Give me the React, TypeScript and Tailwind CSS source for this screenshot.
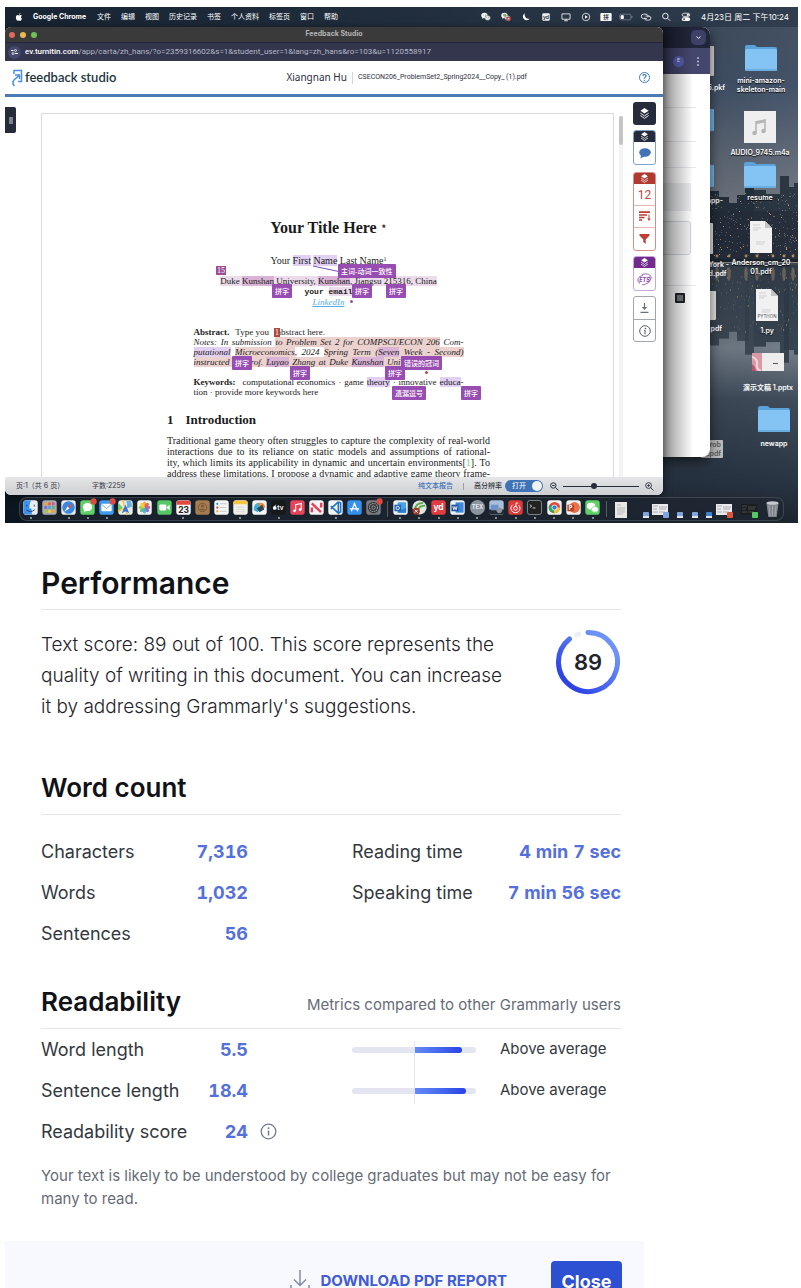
import React from "react";
import type { ReactNode } from "react";

const MENUS = ["文件", "编辑", "视图", "历史记录", "书签", "个人资料", "标签页", "窗口", "帮助"];

/* ---------- wallpaper ---------- */

const TOWERS = [
  [700, 184, 14], [714, 190, 10], [724, 196, 8], [732, 188, 12], [740, 176, 9], [749, 183, 12],
  [761, 187, 14], [775, 169, 9], [779, 180, 10], [789, 176, 12],
];

function Wallpaper() {
  const lights: ReactNode[] = [];
  let seed = 7;
  const rnd = () => {
    seed = (seed * 16807) % 2147483647;
    return seed / 2147483647;
  };
  for (let i = 0; i < 330; i++) {
    const x = 690 + Math.floor(rnd() * 104);
    const y = 186 + Math.floor(rnd() * 64);
    const warm = rnd();
    const fill = warm > 0.8 ? "#d9b070" : warm > 0.4 ? "#7d776c" : "#56616f";
    lights.push(<rect key={i} x={x} y={y} width="1" height="1" fill={fill} opacity={0.8} />);
    if (i % 2) lights.push(<rect key={"r" + i} x={x} y={510 - y} width="1" height="2" fill={fill} opacity={0.4} />);
  }
  return (
    <svg className="absolute inset-0 h-full w-full" viewBox="0 0 793 516" preserveAspectRatio="xMaxYMin slice" aria-hidden="true">
      <defs>
        <linearGradient id="sky" x1="0" y1="0" x2="0" y2="1">
          <stop offset="0" stopColor="#44505f" />
          <stop offset="0.15" stopColor="#445369" />
          <stop offset="0.38" stopColor="#737982" />
          <stop offset="0.5" stopColor="#3f464f" />
          <stop offset="0.66" stopColor="#76808b" />
          <stop offset="0.76" stopColor="#414c5b" />
          <stop offset="0.93" stopColor="#283341" />
          <stop offset="1" stopColor="#1c242e" />
        </linearGradient>
        <linearGradient id="shade" x1="0" y1="0" x2="1" y2="0">
          <stop offset="0" stopColor="#08131d" stopOpacity="0.85" />
          <stop offset="0.5" stopColor="#0a1520" stopOpacity="0.55" />
          <stop offset="1" stopColor="#0a1520" stopOpacity="0" />
        </linearGradient>
      </defs>
      <rect width="793" height="516" fill="url(#sky)" />
      {TOWERS.map(([x, y, w]) => (
        <g key={x}>
          <rect x={x} y={y} width={w} height={254 - y} fill={x % 2 ? "#2c3744" : "#25303d"} />
          <rect x={x} y="258" width={w} height={(254 - y) * 1.15} fill={x % 2 ? "#2e3946" : "#36414e"} opacity="0.85" />
        </g>
      ))}
      <rect x="690" y="204" width="103" height="50" fill="#232c37" opacity="0.7" />
      {lights}
      <rect x="690" y="252" width="103" height="3" fill="#1d242c" />
      <rect x="690" y="255" width="103" height="1" fill="#8b8a87" />
      {[712, 724, 741, 752, 768, 779, 788].map((x) => (
        <g key={x}>
          <circle cx={x} cy="249" r="1.4" fill="#e0a868" opacity="0.8" />
          <ellipse cx={x} cy="267" rx="1.8" ry="7" fill="#d9a878" opacity="0.35" />
        </g>
      ))}
      <rect width="793" height="516" fill="url(#shade)" />
    </svg>
  );
}

/* ---------- desktop icons ---------- */

function Folder() {
  return (
    <svg width="32" height="27" viewBox="0 0 32 27">
      <path d="M0 3q0-2 2-2h7q1 0 2 1l1 1h18q2 0 2 2v5H0z" fill="#5aa2d8" />
      <rect y="5" width="32" height="22" rx="1.5" fill="#83c4f5" />
      <rect y="25" width="32" height="2" rx="1" fill="#6aaee0" />
    </svg>
  );
}
function Sheet({ tag }: { tag?: string }) {
  return (
    <svg width="24" height="32" viewBox="0 0 24 32">
      <path d="M1 0h15l7 7v25H1z" fill="#f1f1f1" />
      <path d="M16 0l7 7h-7z" fill="#c4c4c4" />
      <path d="M4 4h7M4 7h8M4 9h5M7 21h9M7 23h8" stroke="#c2c2c2" strokeWidth="0.7" />
      {tag && <text x="12" y="29" textAnchor="middle" fontSize="4.5" fontFamily="Inter, sans-serif" fill="#555">{tag}</text>}
    </svg>
  );
}
function Audio() {
  return (
    <svg width="32" height="32" viewBox="0 0 32 32">
      <rect width="32" height="32" fill="#efefef" />
      <path d="M12 22V11l9-2v11" fill="none" stroke="#b5b5b5" strokeWidth="1.6" />
      <path d="M12 12l9-2" stroke="#b5b5b5" strokeWidth="2.5" />
      <circle cx="10.5" cy="22" r="2.2" fill="#b5b5b5" />
      <circle cx="19.5" cy="20" r="2.2" fill="#b5b5b5" />
    </svg>
  );
}
function Slides() {
  return (
    <svg width="32" height="18" viewBox="0 0 32 18">
      <rect width="32" height="18" fill="#eeecec" />
      <rect width="10" height="18" fill="#d99aa5" />
      <path d="M0 4q6 2 5 7t4 7" stroke="#f3d4d8" strokeWidth="2" fill="none" />
      <path d="M0 11q3 2 4 7H0z" fill="#b9536b" />
      <path d="M21 10.500h5" stroke="#555" />
    </svg>
  );
}

function DesktopItem({ at, label, children }: { at: string; label: string; children: ReactNode }) {
  return (
    <div className={`absolute flex w-[66px] flex-col items-center gap-[5px] ${at}`}>
      {children}
      <span className="text-center text-[7px] font-semibold leading-[9px] whitespace-pre-line text-white [text-shadow:0_1px_1px_#000]">{label}</span>
    </div>
  );
}

function Peek({ at, children }: { at: string; children: ReactNode }) {
  return <span className={`absolute text-[7px] font-semibold leading-[9px] whitespace-pre-line text-white ${at}`}>{children}</span>;
}

/* ---------- menu bar ---------- */

function Apple({ className }: { className: string }) {
  return (
    <svg className={className} viewBox="0 0 16 16" fill="currentColor">
      <path d="M11.200 0c.1 1.500-1.200 3.100-2.800 3.200C8.200 1.700 9.700.2 11.200 0zM13.800 11.300c-.7 1.900-2 4.200-3.500 4.200-.9 0-1.300-.6-2.400-.6s-1.500.6-2.400.6C3.700 15.500 1.800 12 1.800 8.800c0-3 1.900-4.700 3.800-4.700 1 0 1.900.7 2.600.7.600 0 1.700-.8 3-.8 1.100 0 2 .5 2.600 1.400-2.500 1.500-2.100 4.800 0 5.900z" />
    </svg>
  );
}
function ChatPair() {
  return (
    <>
      <ellipse cx="5.500" cy="5.500" rx="5" ry="4.300" fill="#fff" />
      <path d="M2.500 8l-.5 3 3-2z" fill="#fff" />
      <ellipse cx="10.500" cy="9.500" rx="4.500" ry="3.800" fill="#e8eaec" stroke="#3a4755" strokeWidth="0.7" />
      <circle cx="4" cy="4.800" r=".7" fill="#3a4755" /><circle cx="7" cy="4.800" r=".7" fill="#3a4755" />
      <circle cx="9" cy="9" r=".6" fill="#3a4755" /><circle cx="12" cy="9" r=".6" fill="#3a4755" />
    </>
  );
}
const TRAY: ReactNode[] = [
  <ChatPair />,
  <>
    <ChatPair />
    <circle cx="6" cy="5" r="2.500" fill="#7db36c" />
    <circle cx="12" cy="11" r="3.800" fill="#b7493f" />
    <path d="M10.500 9.500l3 3m0-3l-3 3" stroke="#fff" />
  </>,
  <path d="M6 2a6 6 0 1 0 8 8.500A6.500 6.500 0 0 1 6 2z" fill="#fff" />,
  <>
    <rect x="2" y="2" width="12" height="12" rx="2" fill="#eef0f2" />
    <text x="8" y="11" fontSize="8" fontWeight="700" textAnchor="middle" fontFamily="Inter, sans-serif" fill="#2f3d4c">yd</text>
  </>,
  <path d="M1.500 3h13v8.500h-13zM5 14h6M8 11.500V14" fill="none" stroke="#fff" strokeWidth="1.300" />,
  <>
    <circle cx="8" cy="8" r="6" fill="none" stroke="#fff" strokeWidth="1.200" />
    <path d="M6.500 5.200v5.600L11 8z" fill="#fff" />
  </>,
  <>
    <rect x="-1" y="1.500" width="18" height="13" rx="1.500" fill="#fff" />
    <text x="8" y="11.500" fontSize="9" fontWeight="700" textAnchor="middle" fontFamily="'Noto Sans CJK SC', sans-serif" fill="#2f3d4c">拼</text>
  </>,
  <>
    <rect x="-2" y="3.500" width="18" height="9" rx="2.500" fill="none" stroke="#8f99a4" />
    <rect x="-.5" y="5" width="5" height="6" rx="1" fill="#fff" />
    <path d="M17.500 6.500v3" stroke="#8f99a4" />
  </>,
  <path d="M9.500 10.500H4a3.500 3.500 0 0 1 0-7h4a3.500 3.500 0 0 1 3 5M7 6.500h5.500a3 3 0 0 1 0 6.500H9a3 3 0 0 1-3-4" fill="none" stroke="#fff" strokeWidth="1.300" />,
  <path d="M11.500 6.500a4.500 4.500 0 1 1-9 0 4.500 4.500 0 0 1 9 0zM10.500 10l4 4" fill="none" stroke="#fff" strokeWidth="1.400" />,
  <>
    <rect x="2" y="2" width="12" height="5" rx="2.500" fill="none" stroke="#fff" strokeWidth="1.200" />
    <circle cx="11" cy="4.500" r="1.800" fill="#fff" />
    <rect x="1.500" y="8.500" width="13" height="6" rx="3" fill="#fff" />
    <circle cx="5" cy="11.500" r="1.500" fill="#3a4755" />
  </>,
];

function MenuBar() {
  return (
    <div className="relative flex h-5 items-center bg-[#1d2c3d]/50 pr-[9px] pl-[10px] text-[7px] text-white">
      <Apple className="mr-[10px] size-2" />
      <span className="mr-[11px] text-[7px] font-bold">Google Chrome</span>
      <nav className="flex gap-[10px]">
        {MENUS.map((m) => <span key={m}>{m}</span>)}
      </nav>
      <div className="ml-auto flex items-center gap-[10px]">
        {TRAY.map((g, i) => (
          <svg key={i} className="size-[10px] overflow-visible" viewBox="0 0 16 16" aria-hidden="true">{g}</svg>
        ))}
        <span className="text-[8px] whitespace-nowrap">4月23日 周二 下午10:24</span>
      </div>
    </div>
  );
}

/* ---------- background window ---------- */

function BackWindow() {
  return (
    <div className="absolute top-[20px] left-[600px] flex h-[430px] w-[105px] flex-col overflow-hidden rounded-lg bg-white shadow-[0_4px_12px_rgba(0,0,0,.6)]">
      <div className="flex h-[21px] items-center justify-end bg-[#22263b] pr-1">
        <span className="grid size-[15px] place-items-center rounded-[5px] bg-[#3d4166]">
          <svg width="5" height="4" viewBox="0 0 5 4"><path d="M.5 .5l2 2 2-2" fill="none" stroke="#fff" /></svg>
        </span>
      </div>
      <div className="flex h-[26px] items-center justify-end gap-[13px] bg-[#44476d] pr-[11px]">
        <span className="grid size-[11px] place-items-center rounded-full bg-[#5960b4] text-[5px] text-white">E</span>
        <svg width="2" height="9" viewBox="0 0 2 9" fill="#c3c5dd"><circle cx="1" cy="1" r=".9" /><circle cx="1" cy="4.500" r=".9" /><circle cx="1" cy="8" r=".9" /></svg>
      </div>
      <div className="flex grow flex-col pr-[14px]">
        <div className="h-[34px] border-b border-gray-200" />
        <div className="h-[34px] border-b border-gray-200" />
        <div className="h-[26px] border-b border-gray-200" />
        <div className="mt-[15px] mr-[5px] h-[28px] bg-[#ebedef]" />
        <div className="mt-[10px] mr-[5px] h-[34px] rounded-[3px] border border-gray-300 bg-[#f5f5f5]" />
        <div className="mt-[30px] border-b border-gray-200" />
        <svg className="mt-[7px] mr-[11px] self-end" width="10" height="10" viewBox="0 0 10 10"><rect width="10" height="10" rx="1" fill="#1f2329" /><path d="M2 3h6M2 5h6M2 7h6" stroke="#fff" strokeWidth=".8" /></svg>
      </div>
      <div className="absolute inset-y-0 left-[56px] w-8 bg-gradient-to-r from-black/45 to-transparent" />
    </div>
  );
}

/* ---------- feedback studio window ---------- */

function Layers() {
  return (
    <svg width="9" height="9" viewBox="0 0 16 16">
      <path d="M8 0l6 4-6 4-6-4z" fill="#fff" />
      <path d="M2 7.500l6 4 6-4M2 11l6 4 6-4" fill="none" stroke="#fff" strokeWidth="1.300" />
    </svg>
  );
}

function ToolRail() {
  return (
    <div className="flex w-[23px] flex-col">
      <button aria-label="Layers" className="grid h-[23px] place-items-center rounded-[3px] bg-[#272c3c]">
        <svg width="11" height="11" viewBox="0 0 16 16">
          <path d="M8 0l6 4-6 4-6-4z" fill="#fff" />
          <path d="M2 7.500l6 4 6-4M2 11l6 4 6-4" fill="none" stroke="#fff" strokeWidth="1.300" />
        </svg>
      </button>
      <div className="mt-[5px] overflow-hidden rounded-[3px] border border-[#7ea2cf]">
        <div className="-mx-px -mt-px grid h-3 place-items-center bg-[#272c3c]"><Layers /></div>
        <button aria-label="Comments" className="grid h-[22px] w-full place-items-center">
          <svg width="12" height="11" viewBox="0 0 12 11"><ellipse cx="6" cy="4.500" rx="5.800" ry="4.200" fill="#3f73b5" /><path d="M2 7l-.5 3.500L6 8z" fill="#3f73b5" /></svg>
        </button>
      </div>
      <div className="mt-[7px] overflow-hidden rounded-[3px] border border-[#d98d86]">
        <div className="-mx-px -mt-px grid h-3 place-items-center bg-[#b03a31]"><Layers /></div>
        <button className="grid h-[21px] w-full place-items-center font-[Roboto] text-[12px] leading-none text-[#c0473c]">12</button>
        <button aria-label="Sources" className="grid h-[23px] w-full place-items-center border-y border-[#e8b9b4]">
          <svg width="12" height="11" viewBox="0 0 12 11"><path d="M0 1.200h11M0 4h8M0 6.500h5.500M0 9h3" stroke="#bd3f35" strokeWidth="1.700" /><path d="M10 3.500v5" stroke="#bd3f35" /><path d="M8.300 7.500h3.400L10 10z" fill="#bd3f35" /></svg>
        </button>
        <button aria-label="Filter" className="grid h-[22px] w-full place-items-center">
          <svg width="11" height="10" viewBox="0 0 11 10"><path d="M.5 0h10v1.500L6.700 5.500V10L4.300 8V5.500L.5 1.500z" fill="#bd3f35" /></svg>
        </button>
      </div>
      <div className="mt-[5px] overflow-hidden rounded-[3px] border border-[#c9a5da]">
        <div className="-mx-px -mt-px grid h-3 place-items-center bg-[#712b8d]"><Layers /></div>
        <button aria-label="ETS" className="grid h-[22px] w-full place-items-center">
          <svg width="15" height="13" viewBox="0 0 15 13">
            <path d="M3 10.500C-1 8 1 3 6 2.500M5 1.500c5-1.500 9.500 0 9.300 4M12 3.500c4 3-1 8-7 8.300" fill="none" stroke="#8c3fa8" strokeWidth=".8" />
            <text x="7.500" y="8.500" fontSize="5.500" fontStyle="italic" fontWeight="700" textAnchor="middle" fontFamily="Inter, sans-serif" fill="#8c3fa8">ETS</text>
          </svg>
        </button>
      </div>
      <div className="mt-[5px] overflow-hidden rounded-[3px] border border-[#a3a6ad]">
        <button aria-label="Download" className="grid h-[22px] w-full place-items-center">
          <svg width="9" height="10" viewBox="0 0 9 10"><path d="M4.500 0v5M.5 9.300h8" stroke="#6b6f78" strokeWidth="1.200" /><path d="M1.800 4h5.400L4.500 7z" fill="#6b6f78" /></svg>
        </button>
        <button aria-label="Info" className="grid h-[22px] w-full place-items-center border-t border-[#a3a6ad]">
          <svg width="12" height="12" viewBox="0 0 12 12"><circle cx="6" cy="6" r="5.300" fill="none" stroke="#5b5f68" /><circle cx="6.500" cy="3.500" r=".8" fill="#5b5f68" /><path d="M5 5.300h1.300L5.700 8.700h1" fill="none" stroke="#5b5f68" /></svg>
        </button>
      </div>
    </div>
  );
}

const P = ({ children }: { children: ReactNode }) => <span className="bg-[#e2d0f2]">{children}</span>;
const R = ({ children }: { children: ReactNode }) => <span className="bg-[#ecd2cf]">{children}</span>;
const M = ({ children }: { children: ReactNode }) => <span className="bg-[#d9b4d6]">{children}</span>;

function Line({ children, last }: { children: ReactNode; last?: boolean }) {
  return <div className={last ? "whitespace-nowrap" : "[text-align-last:justify]"}>{children}</div>;
}

function Tag({ at, children }: { at: string; children: ReactNode }) {
  return <button className={`absolute rounded-[1px] bg-[#974db1] px-[3px] text-[7px] leading-[14px] font-medium whitespace-nowrap text-white ${at}`}>{children}</button>;
}

function Paper() {
  return (
    <article className="relative flex w-[573px] flex-col items-center overflow-hidden border-x border-t border-[#dcdcdc] bg-white pt-[105px] pl-[2px] font-['Liberation_Serif',serif] text-[#1b1b1b]">
      <h1 className="text-[16px] leading-[18px] font-bold">Your Title Here <sup className="text-[9px]">⋆</sup></h1>
      <p className="mt-[18px] text-[10px] leading-[12px]">Your <P>First</P> <P>Name</P> Last Name<sup className="text-[6px]">1</sup></p>
      <p className="mt-[9px] text-[9px] leading-[11px]"><span className="bg-[#ecdbea]">Duke <M>Kunshan</M> University, <M>Kunshan</M>, Jiangsu 215316, China</span></p>
      <p className="font-['Liberation_Mono',monospace] text-[8px] leading-[10px] font-bold">your <span className="bg-[#ecdbea]">email</span></p>
      <p className="text-[9px] leading-[11px] text-[#55ade0] italic"><a href="#linkedin" className="underline">LinkedIn</a></p>
      <div className="mt-[19px] w-[270px] text-[9px] leading-[10px]">
        <Line last><b className="mr-1">Abstract.</b> Type you<i className="inline-block w-[8px]" />abstract here.</Line>
        <div className="italic">
          <Line>Notes: In submission <R>to Problem Set 2 for COMPSCI/ECON 206</R> Com-</Line>
          <Line><P>putational</P> <R>Microeconomics</R>, 2024 <R>Spring Term (<M>Seven</M> Week - Second)</R></Line>
          <div className="w-[207px]"><Line><R>instructed<i className="inline-block w-[21px]" />rof. <M>Luyao</M> Zhang at Duke <M>Kunshan</M> Uni</R></Line></div>
        </div>
        <div className="mt-[10px]">
          <Line><b className="mr-1">Keywords:</b> computational economics · game <P>theory</P> · innovative <P>educa</P>-</Line>
          <Line last>tion · provide more keywords here</Line>
        </div>
      </div>
      <div className="mt-[16px] w-[323px] text-[10px] leading-[11px]">
        <h2 className="flex gap-3 text-[13px] leading-[14px] font-bold"><span>1</span><span>Introduction</span></h2>
        <div className="mt-[8px]">
          <Line>Traditional game theory often struggles to capture the complexity of real-world</Line>
          <Line>interactions due to its reliance on static models and assumptions of rational-</Line>
          <Line>ity, which limits its applicability in dynamic and uncertain environments[<span className="text-[#6fe05a]">1</span>]. To</Line>
          <Line>address these limitations, I propose a dynamic and adaptive game theory frame-</Line>
        </div>
      </div>
      <svg className="absolute top-[151px] left-[267px]" width="34" height="8" viewBox="0 0 34 8"><path d="M4 1l28 6" stroke="#7a4fc0" /></svg>
      <span className="absolute top-[152px] left-[174px] bg-[#9c4f97] px-px text-[8px] leading-[9px] text-white">15</span>
      <span className="absolute top-[214px] left-[232px] bg-[#b04a3f] px-px text-[8px] leading-[9px] text-white">1</span>
      <span className="absolute top-[186px] left-[308px] size-[3px] rounded-full bg-[#9c4f97]" />
      <span className="absolute top-[257px] left-[383px] size-[3px] rounded-full bg-[#c0473c]" />
      <div className="font-['Noto_Sans_CJK_SC',sans-serif]">
        <Tag at="top-[150px] left-[296px]">主词-动词一致性</Tag>
        <Tag at="top-[170px] left-[230px]">拼字</Tag>
        <Tag at="top-[170px] left-[310px]">拼字</Tag>
        <Tag at="top-[170px] left-[344px]">拼字</Tag>
        <Tag at="top-[242px] left-[190px]">拼字</Tag>
        <Tag at="top-[242px] left-[359px]">错误的冠词</Tag>
        <Tag at="top-[252px] left-[248px]">拼字</Tag>
        <Tag at="top-[252px] left-[343px]">拼字</Tag>
        <Tag at="top-[272px] left-[350px]">遗漏逗号</Tag>
        <Tag at="top-[272px] left-[419px]">拼字</Tag>
      </div>
    </article>
  );
}

function StudioWindow() {
  return (
    <section className="absolute top-[20px] left-0 flex h-[468px] w-[658px] flex-col overflow-hidden rounded-md bg-white shadow-[0_2px_10px_rgba(0,0,0,.6)]">
      <div className="relative flex h-[15px] shrink-0 items-center gap-[5px] bg-[#393a39] px-1">
        <span className="size-[6px] rounded-full bg-[#e0695e]" />
        <span className="size-[6px] rounded-full bg-[#e8b950]" />
        <span className="size-[6px] rounded-full bg-[#6fc257]" />
        <span className="grow pr-[33px] text-center text-[7px] font-bold text-[#b5b5b5]">Feedback Studio</span>
      </div>
      <div className="flex h-[19px] shrink-0 items-center gap-1 border-t border-[#24263a] bg-[#33364d] pl-[3px] font-[Roboto] text-[8px] text-[#b4b6c6]">
        <span className="grid size-[13px] place-items-center rounded-full bg-[#43486c]">
          <svg width="7" height="6" viewBox="0 0 7 6"><path d="M0 1.500h2.500M4 4.500h3" stroke="#fff" /><circle cx="4.500" cy="1.500" r="1" fill="none" stroke="#fff" strokeWidth=".8" /><circle cx="2" cy="4.500" r="1" fill="none" stroke="#fff" strokeWidth=".8" /></svg>
        </span>
        <span className="whitespace-nowrap"><b className="font-medium text-white">ev.turnitin.com</b>/app/carta/zh_hans/?o=2359316602&amp;s=1&amp;student_user=1&amp;lang=zh_hans&amp;ro=103&amp;u=1120558917</span>
      </div>
      <header className="flex h-[36px] shrink-0 items-center border-b-[3px] border-[#4b7ab6] pr-[13px] pl-[7px]">
        <svg width="11" height="18" viewBox="0 0 11 18" fill="none" stroke="#4b8fec" strokeWidth="1.500"><path d="M2 5V1.500h7.500v11H6" /><path d="M3 6h4.500v4M7 6.500L2 11q-2.500 3 .5 6" /></svg>
        <span className="ml-[2px] font-[Lato] text-[13px] font-semibold whitespace-nowrap text-[#1d3440]">feedback studio</span>
        <div className="flex grow items-center justify-center pl-[58px] whitespace-nowrap text-[#2b2e3b]">
          <span className="font-['Noto_Sans'] text-[10px]">Xiangnan Hu</span>
          <span className="mx-[5px] h-3 border-l border-gray-300" />
          <span className="font-[Roboto] text-[7px]">CSECON206_ProblemSet2_Spring2024__Copy_ (1).pdf</span>
        </div>
        <button aria-label="Help" className="grid size-[11px] place-items-center rounded-full border border-[#3f7cc0] text-[9px] leading-none font-semibold text-[#3f7cc0]">?</button>
      </header>
      <div className="flex min-h-0 grow overflow-hidden bg-white">
        <button aria-label="Expand panel" className="mt-[10px] grid h-[26px] w-[11px] shrink-0 place-items-center rounded-r-[2px] bg-[#272c3c]">
          <svg width="4" height="7" viewBox="0 0 4 7"><path d="M1 0v7M3 0v7" stroke="#d6d8de" /></svg>
        </button>
        <div className="mt-4 ml-[25px] flex shrink-0"><Paper /></div>
        <div className="mt-[19px] ml-[5px] w-1 shrink-0 bg-[#f4f4f4]"><div className="h-[29px] rounded-full bg-[#c4c4c4]" /></div>
        <div className="mt-[5px] ml-[10px]"><ToolRail /></div>
      </div>
      <footer className="flex h-[18px] shrink-0 items-center bg-gradient-to-b from-[#e5e6e8] to-[#cdcfd1] pr-[9px] pl-[11px] text-[7px] text-[#33373f]">
        <span className="w-[76px]">页:1（共 6 页）</span>
        <span>字数:2259</span>
        <a href="#text-report" className="ml-auto font-medium text-[#3f73b5]">纯文本报告</a>
        <span className="mx-[10px] h-[7px] border-l border-gray-400" />
        <span className="font-medium">高分辨率</span>
        <button role="switch" aria-checked="true" className="ml-[3px] flex h-3 w-[38px] items-center justify-between rounded-full bg-[#3f73b5] pr-px pl-[7px] text-[7px] text-white">打开<i className="size-[10px] rounded-full bg-[#f2f2f2]" /></button>
        <svg className="ml-[7px]" width="9" height="9" viewBox="0 0 9 9"><path d="M6 3.500a2.700 2.700 0 1 1-5.400 0 2.700 2.700 0 0 1 5.400 0zM5.500 5.500l3 3M2.200 3.500h2.400" fill="none" stroke="#272c3c" /></svg>
        <input aria-label="Zoom" type="range" defaultValue={40} className="mx-[4px] h-2 w-[76px] appearance-none bg-[linear-gradient(#272c3c,#272c3c)] bg-[length:100%_1px] bg-center bg-no-repeat [&::-webkit-slider-thumb]:size-[6px] [&::-webkit-slider-thumb]:appearance-none [&::-webkit-slider-thumb]:rounded-full [&::-webkit-slider-thumb]:bg-[#272c3c]" />
        <svg className="ml-[2px]" width="9" height="9" viewBox="0 0 9 9"><path d="M6.500 3.500a2.900 2.900 0 1 1-5.800 0 2.900 2.900 0 0 1 5.800 0zM5.500 5.500l3 3M2.300 3.500h2.600M3.600 2.200v2.600" fill="none" stroke="#272c3c" strokeWidth=".9" /></svg>
      </footer>
    </section>
  );
}

/* ---------- dock ---------- */

type App = { bg: string; art: ReactNode; open?: boolean; badge?: boolean };
const label = (s: string, size: number, fill = "#fff", y = 11) => (
  <text x="8" y={y} fontSize={size} fontWeight="700" textAnchor="middle" fontFamily="Inter, sans-serif" fill={fill}>{s}</text>
);
const PETALS = ["#f2a23a", "#e7603f", "#c659a3", "#7a6fd0", "#4fa6df", "#56b97b", "#9ccb4a", "#f0d03c"];
const DOCK_A: App[] = [
  { bg: "#e9eef4", open: true, art: <><path d="M3 .5h5.500Q6.500 5 7 9h2l.5 6.500H3A2.500 2.500 0 0 1 .5 13V3A2.500 2.500 0 0 1 3 .5z" fill="#3c93ee" /><path d="M4 5v2M12 5v2M3.500 10.500q4.500 3.500 9 0" fill="none" stroke="#1d3554" strokeWidth=".9" /></> },
  { bg: "#a9adb2", art: <>{[3, 7, 11].map((y, i) => [3, 7, 11].map((x, j) => <rect key={`${x}-${y}`} x={x - 0.5} y={y - 0.5} width="3" height="3" rx=".6" fill={PETALS[(i * 3 + j) % 8]} />))}</> },
  { bg: "#e9eef4", open: true, art: <><circle cx="8" cy="8" r="6.700" fill="#3a86e0" /><path d="M12.500 3.500L9 9 7 7z" fill="#e5483c" /><path d="M3.500 12.500L7 7l2 2z" fill="#fff" /></> },
  { bg: "#5fd06a", open: true, badge: true, art: <><ellipse cx="8" cy="7.500" rx="5" ry="4.300" fill="#fff" /><path d="M5 10l-1 3 4-2z" fill="#fff" /></> },
  { bg: "#3f9bee", open: true, badge: true, art: <><rect x="2.500" y="4" width="11" height="8" rx="1" fill="#fff" /><path d="M2.500 4.500L8 9l5.500-4.500" fill="none" stroke="#5a9fe0" strokeWidth=".9" /></> },
  { bg: "#e8ece6", art: <><path d="M0 3l5 5-5 6z" fill="#6ccb6a" /><path d="M5 0l5 16M0 12L16 5" stroke="#f3c544" strokeWidth="1.600" /><path d="M9 1h5l1 6-5 2z" fill="#66b3ea" /><path d="M8 5l4 9-4-2-4 2z" fill="#3a6fd5" /></> },
  { bg: "#f4f4f2", art: <>{PETALS.map((c, i) => <ellipse key={c} cx="8" cy="4.700" rx="1.900" ry="3" fill={c} opacity=".9" transform={`rotate(${i * 45} 8 8)`} />)}</> },
  { bg: "#57c866", art: <><rect x="2.500" y="4.700" width="7.500" height="6.500" rx="1.500" fill="#fff" /><path d="M10.500 7.500L13.500 5v6l-3-2.500z" fill="#fff" /></> },
  { bg: "#f7f7f7", open: true, art: <><path d="M3 .5h10A2.500 2.500 0 0 1 15.500 3v2H.5V3A2.500 2.500 0 0 1 3 .5z" fill="#e0493e" />{label("23", 9, "#222", 13.500)}</> },
  { bg: "#a47c4f", art: <><circle cx="8" cy="8" r="4.500" fill="none" stroke="#7b5a34" /><circle cx="8" cy="6.500" r="1.600" fill="#7b5a34" /><path d="M4.800 11q3.200-4 6.400 0z" fill="#7b5a34" /></> },
  { bg: "#f5f5f5", art: <><circle cx="3.500" cy="4" r="1.200" fill="#3a86e0" /><circle cx="3.500" cy="8" r="1.200" fill="#e5483c" /><circle cx="3.500" cy="12" r="1.200" fill="#f0a030" /><path d="M6.500 4h7M6.500 8h7M6.500 12h7" stroke="#bbb" strokeWidth=".8" /></> },
  { bg: "#f3f1ea", open: true, art: <><path d="M3 .5h10A2.500 2.500 0 0 1 15.500 3v1.500H.5V3A2.500 2.500 0 0 1 3 .5z" fill="#f5c744" /><path d="M3 7.500h10M3 10h10M3 12.500h10" stroke="#ccc" strokeWidth=".7" /></> },
  { bg: "#f5f6f5", art: <><path d="M2 11q-1-7 5-8l3 2-4 8z" fill="#3fb0d8" /><path d="M7 3q7-1 7 5l-6 4z" fill="#ef8b3a" /><path d="M5 9l6-4 2 5-5 3z" fill="#2d4660" /></> },
  { bg: "#16181a", open: true, art: <><text x="10" y="10.500" fontSize="7" fontWeight="600" textAnchor="middle" fontFamily="Inter, sans-serif" fill="#fff">tv</text><circle cx="4" cy="8.500" r="2" fill="#fff" /><path d="M4 6.500l1.200-1.500" stroke="#fff" strokeWidth=".8" /></> },
  { bg: "#e9435a", art: <><path d="M6 11.500V5l6-1.300v6.500" fill="none" stroke="#fff" strokeWidth="1.200" /><circle cx="4.800" cy="11.500" r="1.500" fill="#fff" /><circle cx="10.800" cy="10.300" r="1.500" fill="#fff" /></> },
  { bg: "#f5f5f5", art: <path d="M3 3.500L12.800 13M3 8v5M13 3v5" stroke="#e5415a" strokeWidth="2.600" /> },
  { bg: "#f2f5f8", open: true, art: <path d="M11 2v12L3 6.500M11 2L3 9.500M11 2l2.500 1.200v9.600L11 14" fill="none" stroke="#2273c3" strokeWidth="1.700" /> },
  { bg: "#3591ee", art: <path d="M8.500 3L4.500 12M7.500 3l4 9M3 9.500h10" stroke="#fff" strokeWidth="1.400" /> },
  { bg: "#797c80", badge: true, art: <><circle cx="8" cy="8" r="6" fill="#303236" /><circle cx="8" cy="8" r="4.300" fill="none" stroke="#a0a3a7" strokeWidth="1.200" strokeDasharray="1.500 .8" /><circle cx="8" cy="8" r="1.800" fill="none" stroke="#a0a3a7" /></> },
];
const DOCK_B: App[] = [
  { bg: "#eef2f6", open: true, art: <><rect x="5" y="2.500" width="9" height="11" rx="1" fill="#4aa3e8" /><path d="M5 8l4.500 2.500L14 8v5.500H5z" fill="#2f7fd0" /><rect x="1.500" y="5" width="7" height="7" fill="#1f62b0" /><circle cx="5" cy="8.500" r="1.800" fill="none" stroke="#fff" strokeWidth=".9" /></> },
  { bg: "transparent", open: true, art: <><circle cx="8" cy="8" r="7.500" fill="#dfe6dd" /><path d="M3 12Q3 3 12 3M6 14Q6 6 14 6" stroke="#5ea650" strokeWidth="2" fill="none" /><circle cx="4.500" cy="12" r="3.800" fill="#a3352b" /><path d="M3 10.500l3 3m0-3l-3 3" stroke="#fff" strokeWidth="1" /></> },
  { bg: "#e23b40", open: true, art: label("yd", 9) },
  { bg: "#eef2f6", open: true, art: <><rect x="6" y="2.500" width="8.500" height="11" fill="#3b88dc" /><rect x="1.500" y="5" width="7.500" height="7" fill="#1c4f9e" /><path d="M3 6.500l1 4 1.200-3.500L6.500 10.500l1-4" stroke="#fff" strokeWidth=".9" fill="none" /></> },
  { bg: "transparent", open: true, art: <><circle cx="8" cy="8" r="8" fill="#8b959d" />{label("TEX", 6, "#e3e6e9", 10)}</> },
  { bg: "#a8bedb", open: true, art: <><path d="M0 10h16v3a2.500 2.500 0 0 1-2.500 2.500h-11A2.500 2.500 0 0 1 0 13z" fill="#222a33" /><rect x="2" y="5" width="8" height="6" fill="#6d93c8" /><circle cx="11" cy="11" r="3" fill="#8d949c" /></> },
  { bg: "#dc3a38", open: true, art: <><circle cx="8" cy="8.800" r="2" fill="none" stroke="#fff" /><path d="M5 5a4.800 4.800 0 1 0 6.500.5M8.500 7V3.500q1.500-1 2.500.3" fill="none" stroke="#fff" /></> },
  { bg: "#202224", open: true, art: <><rect x=".5" y=".5" width="15" height="15" rx="2.500" fill="none" stroke="#8a8c8e" /><path d="M3 5l2 1.500L3 8M6 8.500h3" fill="none" stroke="#eee" strokeWidth=".9" /></> },
  { bg: "#f4f4f4", open: true, art: <><circle cx="8" cy="8" r="6" fill="#e1493c" /><path d="M8 8l-5.500-3A6 6 0 0 0 7.500 14z" fill="#3aa455" /><path d="M8 8h6a6 6 0 0 1-6.500 6z" fill="#f3c536" /><circle cx="8" cy="8" r="2.700" fill="#3c7de0" stroke="#fff" strokeWidth=".8" /></> },
  { bg: "#f4f1ef", open: true, art: <><circle cx="9" cy="8" r="5.800" fill="#e8704b" /><rect x="1.500" y="5" width="7" height="7" fill="#bd3f22" /><text x="5" y="10.500" fontSize="6" fontWeight="700" textAnchor="middle" fontFamily="Inter, sans-serif" fill="#fff">P</text></> },
  { bg: "#5fd06a", open: true, art: <><ellipse cx="6.500" cy="6.500" rx="4.500" ry="3.700" fill="#fff" /><ellipse cx="10.500" cy="10" rx="3.700" ry="3" fill="#fff" stroke="#5fd06a" strokeWidth=".6" /></> },
];

function DockIcon({ app }: { app: App }) {
  return (
    <div className="relative flex flex-col items-center gap-[2px]">
      <svg className="size-[15px] overflow-visible" viewBox="0 0 16 16" aria-hidden="true">
        <rect x=".3" y=".3" width="15.400" height="15.400" rx="3" fill={app.bg} />
        {app.art}
        {app.badge && <circle cx="14.500" cy="1.500" r="3.300" fill="#dd4b40" />}
      </svg>
      <i className={`size-[2px] rounded-full ${app.open ? "bg-[#aeb4ba]" : "bg-transparent"}`} />
    </div>
  );
}

function Mini({ fill = "#7fa5dc" }: { fill?: string }) {
  return <svg width="6" height="6" viewBox="0 0 6 6"><rect width="6" height="6" rx="1" fill={fill} /><path d="M0 4h6v2H0z" fill="#dfe6ee" /></svg>;
}
function Preview({ dark, badge }: { dark?: boolean; badge: string }) {
  return (
    <svg width="17" height="14" viewBox="0 0 17 14">
      <rect width="16" height="11" fill={dark ? "#1b1d1f" : "#e9eaeb"} />
      <path d="M1 2h5M1 5h4M7 3h8M7 5h7M1 8h5M7 8h6" stroke={dark ? "#55595d" : "#9da1a8"} strokeWidth=".8" />
      <rect x="11" y="8" width="6" height="6" rx="1" fill={badge} />
    </svg>
  );
}

function Dock() {
  return (
    <div className="absolute right-[14px] bottom-[2px] left-[14px] flex h-[24px] items-center rounded-lg border border-white/15 bg-[#1e2730]/70 pr-[4px] pl-[3px]">
      <div className="flex grow basis-[359px] justify-between">{DOCK_A.map((a, i) => <DockIcon key={i} app={a} />)}</div>
      <i className="mx-[5px] h-4 border-l border-white/25" />
      <div className="flex grow basis-[208px] justify-between">{DOCK_B.map((a, i) => <DockIcon key={i} app={a} />)}</div>
      <i className="mr-2 ml-[6px] h-4 border-l border-white/25" />
      <div className="flex grow basis-[164px] items-end justify-between">
        <svg width="12" height="16" viewBox="0 0 12 16"><path d="M0 0h12v16H0z" fill="#e7e7e5" /><path d="M2 3h4M2 6h8M2 8h8M2 10h8M2 12h6" stroke="#aaa" strokeWidth=".7" /></svg>
        <span className="flex items-end gap-[3px] pl-2"><Mini /><Preview badge="#7fa5dc" /></span>
        <Mini /><Mini />
        <span className="flex items-end gap-1"><Mini fill="#3b83d0" /><Preview badge="#d9573a" /></span>
        <Preview dark badge="#57c866" />
        <svg width="13" height="17" viewBox="0 0 13 17"><path d="M.5 2h12l-1.800 14h-8.400z" fill="#80868b" /><ellipse cx="6.500" cy="2" rx="6" ry="1.700" fill="#c5c9cc" /><path d="M3 5l1 10M6.500 5v10M10 5L9 15" stroke="#b3b8bc" strokeWidth=".7" /></svg>
      </div>
    </div>
  );
}

function Desktop() {
  return (
    <section className="relative mt-[7px] mr-[3px] ml-[5px] h-[516px] shrink-0 overflow-hidden font-[Inter,'Noto_Sans_CJK_SC',sans-serif]">
      <Wallpaper />
      <MenuBar />
      <i className="absolute top-[39px] right-[84px] h-[30px] w-2 rounded-[1px] bg-[#d6d3cf]" />
      <i className="absolute top-[102px] right-[84px] h-[22px] w-2 rounded-[1px] bg-[#6db2e6]" />
      <i className="absolute top-[158px] right-[84px] h-[22px] w-2 rounded-[1px] bg-[#6db2e6]" />
      <i className="absolute top-[216px] right-[85px] h-[31px] w-2 rounded-[1px] bg-[#dedede]" />
      <i className="absolute top-[284px] right-[82px] h-[29px] w-2 rounded-[1px] bg-[#dedede]" />
      <Peek at="top-[76px] right-[73px]">5.pkf</Peek>
      <Peek at="top-[189px] right-[75px]">app-</Peek>
      <Peek at="top-[253px] right-[69px]">{"York -\nd.pdf"}</Peek>
      <Peek at="top-[317px] right-[76px]">.pdf</Peek>
      <span className="absolute top-[433px] right-[75px] rounded-[1px] bg-[#b9bbbd] px-[2px] text-right text-[7px] leading-[9px] font-semibold whitespace-pre-line text-[#555]">{"Prob\n2.pdf"}</span>
      <DesktopItem at="top-[37px] right-[4px]" label={"mini-amazon-\nskeleton-main"}><Folder /></DesktopItem>
      <DesktopItem at="top-[104px] right-[5px]" label="AUDIO_9745.m4a"><Audio /></DesktopItem>
      <DesktopItem at="top-[154px] right-[5px]" label="resume"><Folder /></DesktopItem>
      <DesktopItem at="top-[214px] right-[4px]" label={"Anderson_cm_20\n01.pdf"}><Sheet /></DesktopItem>
      <DesktopItem at="top-[282px] right-[-2px]" label="1.py"><Sheet tag="PYTHON" /></DesktopItem>
      <div className="absolute top-[346px] right-[-4px] flex w-[68px] flex-col items-center gap-3">
        <Slides />
        <span className="text-[7px] leading-[9px] font-semibold whitespace-nowrap text-white">演示文稿 1.pptx</span>
      </div>
      <div className="absolute top-[398px] right-[8px] flex w-8 flex-col items-center gap-[7px]">
        <Folder />
        <span className="text-[7px] leading-[9px] font-semibold text-white">newapp</span>
      </div>
      <BackWindow />
      <StudioWindow />
      <Dock />
    </section>
  );
}

/* ---------- writing report ---------- */

function Heading({ children, note, large }: { children: ReactNode; note?: string; large?: boolean }) {
  return (
    <div className="flex items-center justify-between border-b border-[#e4e5ee] pb-[9px]">
      <h2 className={`leading-[34px] font-semibold text-[#101217] ${large ? "text-[30px]" : "text-[26px]"}`}>{children}</h2>
      {note && <span className="pt-[6px] text-[15px] text-[#666b77]">{note}</span>}
    </div>
  );
}

function Stat({ name, value }: { name: string; value: string }) {
  return (
    <div className="flex h-[41px] items-center justify-between">
      <dt className="whitespace-nowrap text-[#343840]">{name}</dt>
      <dd className="font-bold whitespace-nowrap text-[#5470dc] tabular-nums">{value}</dd>
    </div>
  );
}

function Meter({ fill }: { fill: number }) {
  return (
    <div className="ml-[104px] flex h-[6px] w-[124px] rounded-full bg-[#e3e5f1] pl-[62px]">
      <div className="rounded-r-full bg-gradient-to-r from-[#678bf7] to-[#2c42e4]" style={{ width: `${fill}%` }} />
    </div>
  );
}

function Report() {
  return (
    <main className="mt-[43px] ml-[5px] flex max-w-[639px] shrink-0 flex-col font-[Inter,sans-serif] text-[18px]">
      <div className="pr-[23px] pl-9">
        <Heading large>Performance</Heading>
        <div className="mt-[19px] flex items-start justify-between">
          <p className="w-[470px] text-[19px] leading-[31px] font-light text-[#1f232b]">Text score: 89 out of 100. This score represents the quality of writing in this document. You can increase it by addressing Grammarly's suggestions.</p>
          <svg width="66" height="66" viewBox="0 0 66 66" role="img" aria-label="89">
            <defs><linearGradient id="ring" x1="1" y1="0" x2="0" y2="1"><stop offset="0.200" stopColor="#6d93f8" /><stop offset="0.850" stopColor="#2c42e4" /></linearGradient></defs>
            <path d="M19.500 6.900A29.500 29.500 0 0 1 26 4.400" fill="none" stroke="#eceef8" strokeWidth="5" />
            <path d="M33 3.500A29.500 29.500 0 1 1 14.500 10" fill="none" stroke="url(#ring)" strokeWidth="5" strokeLinecap="round" />
            <text x="33" y="41" textAnchor="middle" fontSize="22" fontWeight="600" fontFamily="Inter, sans-serif" fill="#1f232b">89</text>
          </svg>
        </div>
        <div className="mt-[49px]"><Heading>Word count</Heading></div>
        <div className="mt-4 flex justify-between">
          <dl className="w-[207px]">
            <Stat name="Characters" value="7,316" />
            <Stat name="Words" value="1,032" />
            <Stat name="Sentences" value="56" />
          </dl>
          <dl className="w-[269px]">
            <Stat name="Reading time" value="4 min 7 sec" />
            <Stat name="Speaking time" value="7 min 56 sec" />
          </dl>
        </div>
        <div className="mt-[31px]"><Heading note="Metrics compared to other Grammarly users">Readability</Heading></div>
        <div className="relative">
          <i className="absolute top-[12px] left-[373px] h-[62px] border-l border-[#e3e5ee]" />
          <div className="flex items-center">
            <dl className="w-[207px]"><Stat name="Word length" value="5.5" /></dl>
            <Meter fill={77} />
            <span className="ml-6 text-[15px] text-[#343840]">Above average</span>
          </div>
          <div className="flex items-center">
            <dl className="w-[207px]"><Stat name="Sentence length" value="18.4" /></dl>
            <Meter fill={84} />
            <span className="ml-6 text-[15px] text-[#343840]">Above average</span>
          </div>
          <div className="flex items-center">
            <dl className="w-[207px]"><Stat name="Readability score" value="24" /></dl>
            <button aria-label="About the readability score" className="ml-3">
              <svg width="17" height="17" viewBox="0 0 17 17"><circle cx="8.500" cy="8.500" r="7.300" fill="none" stroke="#747a90" strokeWidth="1.300" /><path d="M8.500 7.500v5M8.500 4.300v1.600" stroke="#747a90" strokeWidth="1.500" /></svg>
            </button>
          </div>
        </div>
      </div>
      <p className="mt-3 pr-3 pl-9 text-[15px] leading-[23px] text-[#666b77]">Your text is likely to be understood by college graduates but may not be easy for many to read.</p>
      <footer className="mt-[31px] flex h-20 shrink-0 items-center justify-end gap-[44px] bg-[#f8f9fe] pr-[22px]">
        <button className="flex items-center gap-[10px] text-[15px] font-bold whitespace-nowrap text-[#3f5bd6]">
          <svg width="20" height="23" viewBox="0 0 20 23" fill="none" stroke="#858aa2" strokeWidth="1.500"><path d="M10 0v15M4 9.500l6 6 6-6M1 15v6h18v-6" /></svg>
          DOWNLOAD PDF REPORT
        </button>
        <button className="h-10 w-[71px] rounded-[4px] bg-[#2d4fd2] text-[18px] font-bold text-white">Close</button>
      </footer>
    </main>
  );
}

export default function App() {
  return (
    <div className="flex h-screen flex-col overflow-hidden bg-white">
      <Desktop />
      <Report />
    </div>
  );
}
